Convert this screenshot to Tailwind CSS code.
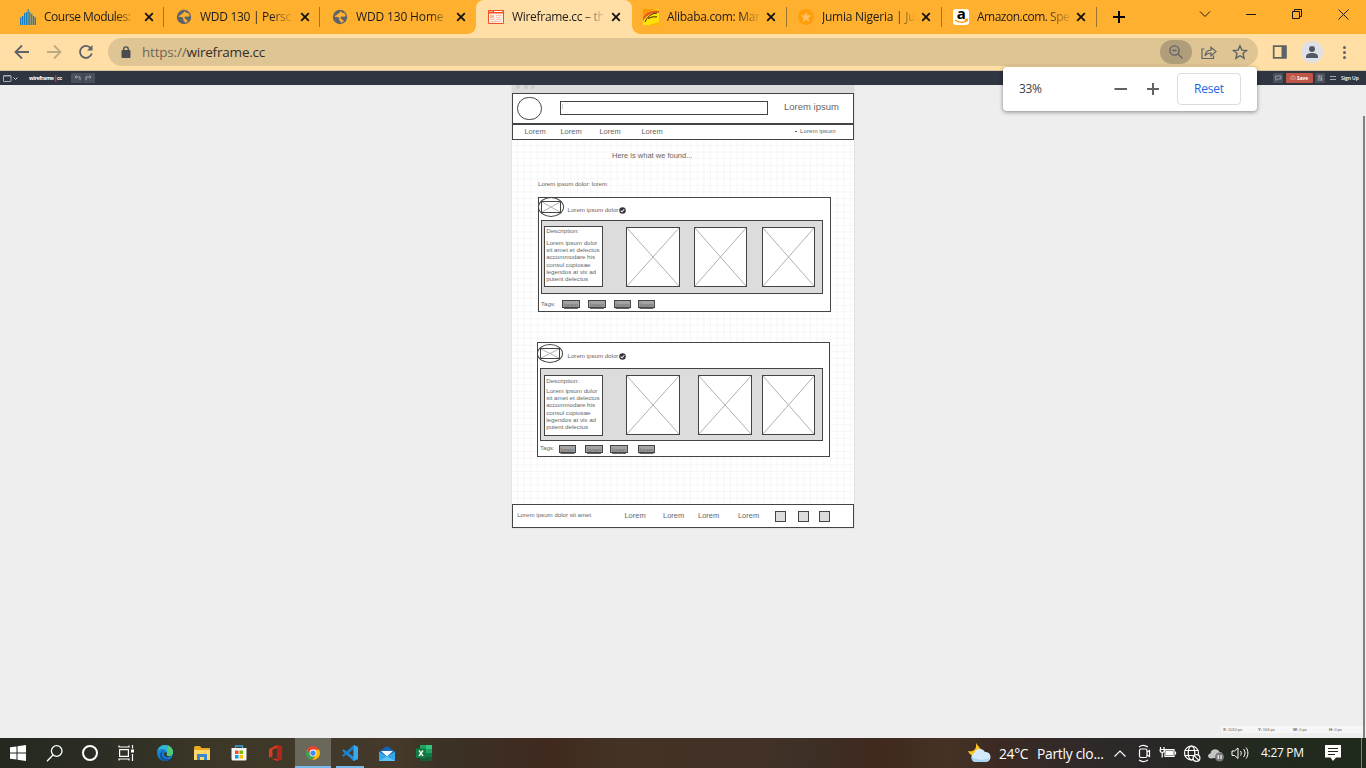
<!DOCTYPE html>
<html lang="en">
<head>
<meta charset="utf-8">
<title>Wireframe.cc</title>
<script src="https://cdn.jsdelivr.net/npm/@tailwindcss/browser@4"></script>
</head>
<body class="w-[1366px] h-[768px] overflow-hidden relative flex flex-col bg-[#eeeeee] font-['Open_Sans',sans-serif]">

<svg class="hidden">
  <symbol id="close" viewBox="0 0 10 10"><path d="M1.2 1.2L8.8 8.8M8.8 1.2L1.2 8.8" stroke="#111" stroke-width="1.8" fill="none"/></symbol>
  <symbol id="globe" viewBox="0 0 16 16"><circle cx="8" cy="8" r="7.2" fill="#5f6368"/><path d="M9 2.2c-1.6.6-1.2 1.9-2.4 2.3-1.5.4-1.3 1.5-2.6 1.8L2.4 7.200c1.600 1.300 3.200.5 4.400 1.300 1.200.8 0 2 .6 3 .4.900 1.500.600 1.400 2.300 1.300-.200 2.600-.800 3.400-1.700-1.500-.200-1.200-1.800-2.600-2.200-1.300-.5-1.600-1.300-.700-2 1-.800 2.500.300 3.600-.300.600-.400 1-.3 1.300-.1-.1-1.500-.8-2.900-1.800-3.800-.8.500-1.800.5-2-.3z" fill="#ffb02e"/></symbol>
  <symbol id="cross" viewBox="0 0 54 60" preserveAspectRatio="none"><path d="M0 0L54 60M54 0L0 60" stroke="#b0b0b0" stroke-width="1" vector-effect="non-scaling-stroke"/></symbol>
  <symbol id="check" viewBox="0 0 8 8"><circle cx="4" cy="4" r="2.900" fill="#333"/><path d="M2.400 4.100L3.600 5.200L5.600 2.900" stroke="#fff" stroke-width=".9" fill="none"/></symbol>
</svg>

<!-- Tab strip -->
<header class="h-[34px] shrink-0 flex bg-[#ffb02e] pl-2 text-[12px] tracking-[-0.5px] text-[#1c1c1c]">
  <div class="w-[156px] flex items-center pl-3">
    <svg class="size-4 shrink-0" viewBox="0 0 16 16" fill="#1c7fbd"><path d="M0 8.500h1.400V16H0zM2 7h1.400v9H2zM4 4h1.400v12H4zM6 3h1.300v13H6zM7.700 0h1v16h-1zM9.200 3h1.300v13H9.200zM11.100 5h1.300v11h-1.300zM12.900 7h1.300v9h-1.300zM14.700 8.500H16V16h-1.300z"/></svg>
    <span class="ml-2 w-[91px] shrink-0 whitespace-nowrap [mask-image:linear-gradient(to_right,black_78%,#0003_98%)]">Course Modules:</span>
    <svg class="size-[10px] ml-[9px] shrink-0"><use href="#close"/></svg><i class="ml-[9px] h-5 w-px shrink-0 bg-[#9c7530]"></i>
  </div>
  <div class="w-[156px] flex items-center pl-3">
    <svg class="size-4 shrink-0"><use href="#globe"/></svg>
    <span class="ml-2 w-[91px] shrink-0 whitespace-nowrap tracking-[-0.3px] [mask-image:linear-gradient(to_right,black_78%,#0003_98%)]">WDD 130 | Perso</span>
    <svg class="size-[10px] ml-[9px] shrink-0"><use href="#close"/></svg><i class="ml-[9px] h-5 w-px shrink-0 bg-[#9c7530]"></i>
  </div>
  <div class="w-[156px] flex items-center pl-3">
    <svg class="size-4 shrink-0"><use href="#globe"/></svg>
    <span class="ml-2 w-[91px] shrink-0 whitespace-nowrap tracking-[-0.15px] [mask-image:linear-gradient(to_right,black_82%,#0003_98%)]">WDD 130 Home</span>
    <svg class="size-[10px] ml-[9px] shrink-0"><use href="#close"/></svg>
  </div>
  <div class="w-[156px] relative flex items-center pl-3 bg-[#ffdfa5] rounded-t-[8px]">
    <i class="absolute bottom-0 -left-2 size-2 bg-[radial-gradient(circle_at_0_0,transparent_7.5px,#ffdfa5_8px)]"></i>
    <i class="absolute bottom-0 -right-2 size-2 bg-[radial-gradient(circle_at_100%_0,transparent_7.5px,#ffdfa5_8px)]"></i>
    <svg class="size-4 shrink-0" viewBox="0 0 16 16"><path d="M.5 1.500h15v13H.5z" fill="#fff0e6" stroke="#f4511e"/><path d="M0 1h16v3.500H0z" fill="#f4511e"/><path d="M1.500 2.500h1M3.500 2.500h1M6 2.500h8.500" stroke="#fff"/><path d="M2 6h4v3H2z" fill="#f9b79f"/><path d="M8 6.500h5.500M8 8.500h4.500M2.500 10.500h4M8 10.500h5.500M2.500 12.500h11" stroke="#fbc0ab"/></svg>
    <span class="ml-2 w-[91px] shrink-0 whitespace-nowrap tracking-[-0.3px] [mask-image:linear-gradient(to_right,black_78%,#0003_98%)]">Wireframe.cc – th</span>
    <svg class="size-[10px] ml-[8px] shrink-0"><use href="#close"/></svg>
  </div>
  <div class="w-[155px] flex items-center pl-[11px]">
    <svg class="size-4 shrink-0" viewBox="0 0 16 16"><path d="M0 0h16v16H0z" fill="#ffe10a"/><path d="M0 0h14C7 1 2 5 0 10z" fill="#ff9800"/><path d="M0 9C3 3 8 1 16 1.500V4C9 3 4 6 0 12z" fill="#e8572a"/><path d="M16 13v3H6z" fill="#ffb300"/><path d="M2 13C4 8 8 4.500 14 4M5 9.500l4-1.500 5-.2" stroke="#3d2500" stroke-width="1" fill="none"/></svg>
    <span class="ml-2 w-[92px] shrink-0 whitespace-nowrap tracking-[-0.3px] [mask-image:linear-gradient(to_right,black_78%,#0003_98%)]">Alibaba.com: Mar</span>
    <svg class="size-[10px] ml-[7px] shrink-0"><use href="#close"/></svg><i class="ml-[10px] h-5 w-px shrink-0 bg-[#9c7530]"></i>
  </div>
  <div class="w-[155px] flex items-center pl-[11px]">
    <svg class="size-4 shrink-0" viewBox="0 0 16 16"><circle cx="8" cy="8" r="8" fill="#ff9d0b"/><path d="M8 2.800l1.500 3.500 3.800.3-2.900 2.500.9 3.700L8 10.800l-3.300 2 .9-3.700-2.900-2.500 3.800-.3z" fill="#ffc164"/></svg>
    <span class="ml-2 w-[92px] shrink-0 whitespace-nowrap tracking-[-0.25px] [mask-image:linear-gradient(to_right,black_80%,#0003_98%)]">Jumia Nigeria | Ju</span>
    <svg class="size-[10px] ml-[7px] shrink-0"><use href="#close"/></svg><i class="ml-[10px] h-5 w-px shrink-0 bg-[#9c7530]"></i>
  </div>
  <div class="w-[155px] flex items-center pl-[11px]">
    <span class="size-4 shrink-0 rounded-[3px] bg-white flex flex-col items-center text-[15px] font-bold leading-[9px] text-black">a
      <svg class="w-4 h-[6px] shrink-0" viewBox="0 0 16 6"><path d="M2 2c4 3 9 3 11.500.5M11.500 1.500l3-.2-.8 2.500" stroke="#ff9900" stroke-width="1.300" fill="none"/></svg></span>
    <span class="ml-2 w-[92px] shrink-0 whitespace-nowrap tracking-[-0.5px] [mask-image:linear-gradient(to_right,black_74%,#0003_98%)]">Amazon.com. Spe</span>
    <svg class="size-[10px] ml-[7px] shrink-0"><use href="#close"/></svg><i class="ml-[10px] h-5 w-px shrink-0 bg-[#9c7530]"></i>
  </div>
  <svg class="w-[262px] h-[34px] ml-auto" viewBox="1104 0 262 34" fill="none" stroke="#1a1a1a"><path d="M1113 17h12M1119 11v12" stroke="#000" stroke-width="2"/><path d="M1200 11.500l5 5 5-5M1246 14.500h10M1338.500 9.500l10 10M1348.500 9.500l-10 10"/><path d="M1292.500 11.500h7v7h-7zM1294.500 11.500v-2h7v7h-2"/></svg>
</header>

<!-- Toolbar -->
<div class="h-[37px] shrink-0 flex items-center bg-[#ffdfa5] border-b border-[#d8c49b]">
  <svg class="w-[108px] h-[36px]" viewBox="0 34 108 36" fill="none" stroke="#5f6368" stroke-width="1.800"><path d="M29 52H16M22 45.500L15.500 52L22 58.500"/><path d="M47 52h13M54 45.500L60.500 52L54 58.500" stroke="#bfa982"/><path d="M91 48.500a6 6 0 1 0 .8 5"/><path d="M92.500 45v5.500H87z" fill="#5f6368" stroke="none"/></svg>
  <div class="w-[1150px] h-[28px] rounded-full bg-[#dfc594] flex items-center">
    <svg class="w-[10px] h-[12px] ml-[13px]" viewBox="0 0 10 12"><path d="M1 4.500h8v7H1z" fill="#4a4c50" stroke="#4a4c50" stroke-linejoin="round"/><path d="M2.700 5V3.200a2.300 2.300 0 0 1 4.600 0V5" fill="none" stroke="#4a4c50" stroke-width="1.300"/></svg>
    <span class="ml-[11px] text-[13.5px] tracking-[-0.2px] text-[#332f28]"><span class="text-[#6f6655]">https://</span>wireframe.cc</span>
    <svg class="ml-auto mr-[6px] w-[92px] h-[24px]" viewBox="1160 40 92 24" fill="none" stroke="#5f6368" stroke-width="1.400"><rect x="1160" y="40" width="32" height="24" rx="12" fill="#b09d7a" stroke="none"/><circle cx="1174.500" cy="50.500" r="4.600"/><path d="M1178 54l4.500 4.500M1172.500 50.500h4"/><path d="M1204.500 49h-2.500v9.500h11.500v-3M1205 56c.5-4 3-5.800 6-5.800v-3l5 4.300-5 4.500v-3c-2.500 0-4.500.5-6 3z" stroke-width="1.200"/><path d="M1240 45.800l1.900 4.300 4.600.4-3.500 3.100 1.100 4.600-4.100-2.500-4.100 2.500 1.100-4.600-3.500-3.100 4.600-.4z"/></svg>
  </div>
  <svg class="w-[108px] h-[36px]" viewBox="1258 34 108 36"><path d="M1273.700 46.200h12.100v11.600h-12.100z" fill="none" stroke="#5f6368" stroke-width="1.700"/><path d="M1281.500 46h5v12h-5z" fill="#5f6368"/><circle cx="1312" cy="52" r="11" fill="#dfe1e6"/><circle cx="1312" cy="49" r="3" fill="#515964"/><path d="M1306 58v-1.500c0-2.500 3-3.500 6-3.500s6 1 6 3.500V58z" fill="#515964"/><g fill="#5f6368"><circle cx="1344.500" cy="47.500" r="1.500"/><circle cx="1344.500" cy="52.500" r="1.500"/><circle cx="1344.500" cy="57.500" r="1.500"/></g></svg>
</div>

<!-- App bar -->
<div class="h-[14px] shrink-0 relative z-10 flex items-center bg-[#2f3541] text-white">
  <svg class="w-[16px] h-[14px] ml-[3px]" viewBox="3 71 16 14" fill="none" stroke="#a9adb4"><rect x="3.500" y="75.500" width="7.500" height="6" rx=".5"/><path d="M3.500 76h7.500" /><path d="M13.500 77.500l2 2 2-2" stroke="#d0d2d6"/></svg>
  <span class="ml-[10px] w-[30px] text-[5.4px] leading-[14px] font-bold tracking-[-0.4px] whitespace-nowrap">wireframe<span class="text-[#e04a3a] text-[7px] leading-[6px]">|</span>cc</span>
  <svg class="w-[24px] h-[10px] ml-[12px]" viewBox="0 0 24 10" fill="none" stroke="#a4a8ae" stroke-width=".9"><rect width="24" height="10" rx="1" fill="#4a505b" stroke="none"/><path d="M12 0v10" stroke="#373d48"/><path d="M9 7V4H4M5.500 2.500L4 4l1.500 1.500M15 7V4h5M18.500 2.500L20 4l-1.500 1.500"/></svg>
  <div class="ml-auto flex items-center">
    <svg class="w-[10px] h-[10px]" viewBox="0 0 10 10"><rect width="10" height="10" rx="1" fill="#4a505b"/><path d="M2.500 3h5.500v3H4.500L3 7.500z" fill="none" stroke="#a4a8ae" stroke-width=".8"/></svg>
    <span class="ml-[3px] w-[27px] h-[10px] rounded-[1px] bg-[#bf5647] flex items-center text-[4.800px] leading-[10px] font-bold"><svg class="w-[6px] h-[6px] ml-[4px] mr-[1px]" viewBox="0 0 6 6"><path d="M1.500 4.500a1.300 1.300 0 0 1 0-2.500 1.600 1.600 0 0 1 3 0 1.300 1.300 0 0 1 0 2.500M3 5V3" stroke="#ecc" stroke-width=".7" fill="none"/></svg>Save</span>
    <svg class="w-[10px] h-[10px] ml-[2px]" viewBox="0 0 10 10"><rect width="10" height="10" rx="1" fill="#4a505b"/><path d="M2.500 3h5M2.500 5h5M2.500 7h5M4 2.500v2M6.500 4.500v3" stroke="#b4b8be" stroke-width=".8"/></svg>
    <svg class="w-[6px] h-[6px] ml-[5px]" viewBox="0 0 6 6"><path d="M0 1.500h6M0 4.500h6" stroke="#a4a8ae" stroke-width="1"/></svg>
    <span class="ml-[5px] w-[25px] text-[5.100px] leading-[14px] font-semibold tracking-[-0.1px] whitespace-nowrap">Sign Up</span>
  </div>
</div>

<!-- Wireframe canvas; its items are freely placed -->
<main class="relative flex-1 font-['Liberation_Sans',sans-serif] text-[#666] whitespace-nowrap leading-[8px]">
 <div class="absolute left-[512px] top-0 w-[342px] h-[443px] bg-white shadow-[0_0_1px_1px_#e4e4e4] bg-[linear-gradient(to_right,#f6f6f6_1px,transparent_1px),linear-gradient(to_bottom,#f6f6f6_1px,transparent_1px)] bg-size-[6.67px_6.67px] bg-position-[5px_0px]"></div>
 <div class="absolute left-[512px] top-0 w-[342px] h-[8px] bg-[#dcdcdc]"></div>
 <i class="absolute left-[516px] top-0 size-1 rounded-full bg-[#cbcbcb]"></i><i class="absolute left-[524px] top-0 size-1 rounded-full bg-[#cbcbcb]"></i><i class="absolute left-[531px] top-0 size-1 rounded-full bg-[#cbcbcb]"></i>

 <div class="absolute left-[512px] top-[8px] w-[342px] h-[31px] border border-[#444] bg-white"></div>
 <div class="absolute left-[517px] top-[12px] w-[25px] h-[23px] border border-[#444] rounded-full"></div>
 <div class="absolute left-[560px] top-[16px] w-[208px] h-[14px] border border-[#444]"></div>
 <i class="absolute left-[562px] top-[19px] w-px h-[5px] bg-[#ccc]"></i>
 <span class="absolute left-[784px] top-[18px] text-[9.5px]">Lorem ipsum</span>
 <div class="absolute left-[512px] top-[39px] w-[342px] h-[16px] border border-[#444] bg-white"></div>
 <span class="absolute left-[524.4px] top-[43px] text-[7.5px]">Lorem</span>
 <span class="absolute left-[560.4px] top-[43px] text-[7.5px]">Lorem</span>
 <span class="absolute left-[599.4px] top-[43px] text-[7.5px]">Lorem</span>
 <span class="absolute left-[641.4px] top-[43px] text-[7.5px]">Lorem</span>
 <i class="absolute left-[795px] top-[46px] w-[2px] h-px bg-[#555]"></i>
 <span class="absolute left-[800px] top-[42px] text-[6.2px]">Lorem ipsum</span>
 <span class="absolute left-[612px] top-[67px] text-[7.5px]">Here is what we found...</span>
 <span class="absolute left-[538px] top-[95px] text-[6.1px]">Lorem ipsum dolor: lorem</span>

 <!-- First result -->
 <div class="absolute left-[538px] top-[112px] w-[293px] h-[115px] border border-[#444] bg-white"></div>
 <div class="absolute left-[538px] top-[112px] w-[26px] h-[20px] border border-[#444] rounded-[50%]"></div>
 <div class="absolute left-[541px] top-[116px] w-[20px] h-[12px] border border-[#444]"><svg class="size-full block"><use href="#cross"/></svg></div>
 <span class="absolute left-[567.5px] top-[121px] text-[6.15px]">Lorem ipsum dolor</span>
 <svg class="absolute left-[618px] top-[121px] size-[9px]"><use href="#check"/></svg>
 <div class="absolute left-[541px] top-[135px] w-[282px] h-[74px] border border-[#444] bg-[#dcdcdc]"></div>
 <div class="absolute left-[544px] top-[141px] w-[59px] h-[61px] border border-[#444] bg-white"></div>
 <span class="absolute left-[546.2px] top-[142px] text-[6.2px]">Description:</span>
 <p class="absolute left-[546.2px] top-[154px] text-[6.2px] leading-[7.2px]">Lorem ipsum dolor<br>sit amet et delectus<br>accommodare his<br>consul copiosae<br>legendos at vix ad<br>putent delectus</p>
 <div class="absolute left-[626px] top-[142px] w-[54px] h-[60px] border border-[#444] bg-white"><svg class="size-full block"><use href="#cross"/></svg></div>
 <div class="absolute left-[694px] top-[142px] w-[53px] h-[60px] border border-[#444] bg-white"><svg class="size-full block"><use href="#cross"/></svg></div>
 <div class="absolute left-[762px] top-[142px] w-[53px] h-[60px] border border-[#444] bg-white"><svg class="size-full block"><use href="#cross"/></svg></div>
 <span class="absolute left-[541px] top-[215px] text-[6.100px]">Tags:</span>
 <div class="absolute left-[562px] top-[215px] w-[18px] h-[8px] border border-[#444] bg-[#a3a3a3] text-[#666] text-[5.6px] leading-[8px] text-center underline decoration-[0.5px]">lorem</div>
 <div class="absolute left-[588px] top-[215px] w-[18px] h-[8px] border border-[#444] bg-[#a3a3a3] text-[#666] text-[5.6px] leading-[8px] text-center underline decoration-[0.5px]">lorem</div>
 <div class="absolute left-[614px] top-[215px] w-[17px] h-[8px] border border-[#444] bg-[#a3a3a3] text-[#666] text-[5.6px] leading-[8px] text-center underline decoration-[0.5px]">lorem</div>
 <div class="absolute left-[638px] top-[215px] w-[17px] h-[8px] border border-[#444] bg-[#a3a3a3] text-[#666] text-[5.6px] leading-[8px] text-center underline decoration-[0.5px]">lorem</div>

 <!-- Second result -->
 <div class="absolute left-[537px] top-[257px] w-[293px] h-[115px] border border-[#444] bg-white"></div>
 <div class="absolute left-[537px] top-[259px] w-[26px] h-[19px] border border-[#444] rounded-[50%]"></div>
 <div class="absolute left-[540px] top-[263px] w-[20px] h-[11px] border border-[#444]"><svg class="size-full block"><use href="#cross"/></svg></div>
 <span class="absolute left-[567.5px] top-[267px] text-[6.15px]">Lorem ipsum dolor</span>
 <svg class="absolute left-[618px] top-[267px] size-[9px]"><use href="#check"/></svg>
 <div class="absolute left-[540px] top-[283px] w-[283px] h-[73px] border border-[#444] bg-[#dcdcdc]"></div>
 <div class="absolute left-[544px] top-[290px] w-[59px] h-[61px] border border-[#444] bg-white"></div>
 <span class="absolute left-[546.2px] top-[292px] text-[6.2px]">Description:</span>
 <p class="absolute left-[546.2px] top-[302px] text-[6.2px] leading-[7.2px]">Lorem ipsum dolor<br>sit amet et delectus<br>accommodare his<br>consul copiosae<br>legendos at vix ad<br>putent delectus</p>
 <div class="absolute left-[626px] top-[290px] w-[54px] h-[60px] border border-[#444] bg-white"><svg class="size-full block"><use href="#cross"/></svg></div>
 <div class="absolute left-[698px] top-[290px] w-[54px] h-[60px] border border-[#444] bg-white"><svg class="size-full block"><use href="#cross"/></svg></div>
 <div class="absolute left-[762px] top-[290px] w-[53px] h-[60px] border border-[#444] bg-white"><svg class="size-full block"><use href="#cross"/></svg></div>
 <span class="absolute left-[540px] top-[359px] text-[6.1px]">Tags:</span>
 <div class="absolute left-[559px] top-[360px] w-[17px] h-[8px] border border-[#444] bg-[#a3a3a3] text-[#666] text-[5.6px] leading-[8px] text-center underline decoration-[0.5px]">lorem</div>
 <div class="absolute left-[585px] top-[360px] w-[18px] h-[8px] border border-[#444] bg-[#a3a3a3] text-[#666] text-[5.6px] leading-[8px] text-center underline decoration-[0.5px]">lorem</div>
 <div class="absolute left-[610px] top-[360px] w-[18px] h-[8px] border border-[#444] bg-[#a3a3a3] text-[#666] text-[5.6px] leading-[8px] text-center underline decoration-[0.5px]">lorem</div>
 <div class="absolute left-[638px] top-[360px] w-[17px] h-[8px] border border-[#444] bg-[#a3a3a3] text-[#666] text-[5.6px] leading-[8px] text-center underline decoration-[0.5px]">lorem</div>

 <!-- Footer -->
 <div class="absolute left-[512px] top-[419px] w-[342px] h-[24px] border border-[#444] bg-white"></div>
 <span class="absolute left-[517.2px] top-[426px] text-[6.15px]">Lorem ipsum dolor sit amet</span>
 <span class="absolute left-[624.4px] top-[427px] text-[7.5px]">Lorem</span>
 <span class="absolute left-[663px] top-[427px] text-[7.5px]">Lorem</span>
 <span class="absolute left-[698px] top-[427px] text-[7.5px]">Lorem</span>
 <span class="absolute left-[737.9px] top-[427px] text-[7.5px]">Lorem</span>
 <i class="absolute left-[775px] top-[426px] size-[11px] border border-[#444] bg-[#dcdcdc]"></i>
 <i class="absolute left-[798px] top-[426px] size-[11px] border border-[#444] bg-[#dcdcdc]"></i>
 <i class="absolute left-[819px] top-[426px] size-[11px] border border-[#444] bg-[#dcdcdc]"></i>

 <i class="absolute right-px top-[31px] w-[2px] bottom-0 bg-[#7f8287]"></i>
 <div class="absolute right-[3px] bottom-[5px] w-[142px] h-[7px] bg-[#f6f6f6] text-[4.200px] leading-[7px] tracking-[-0.1px] flex">
   <span class="w-[35px] pl-[2px]"><b>X:</b> 1010 px</span><span class="w-[36px] pl-[2px]"><b>Y:</b> 164 px</span><span class="w-[35px] pl-[1px]"><b>W:</b> 0 px</span><span class="pl-[2px]"><b>H:</b> 0 px</span>
 </div>
</main>

<!-- Zoom bubble -->
<div class="absolute z-20 left-[1003px] top-[67px] w-[254px] h-[44px] rounded-[4px] bg-white shadow-[0_1px_4px_rgba(0,0,0,0.45)] flex items-center text-[12px] text-[#3c4043]">
  <span class="ml-4 w-[94px] tracking-[-0.4px]">33%</span>
  <svg class="w-[46px] h-[14px]" viewBox="0 0 46 14"><path d="M1.500 7h12.500M34 7h12M40 1v12" stroke="#5f6368" stroke-width="2"/></svg>
  <span class="ml-auto mr-4 w-[64px] h-[32px] rounded-[4px] border border-[#dadce0] grid place-items-center text-[#1a66e0] tracking-[-0.2px]">Reset</span>
</div>

<!-- Taskbar -->
<footer class="h-[30px] shrink-0 flex text-white bg-[linear-gradient(to_right,#23291f_0,#2b2c24_90px,#3b3727_200px,#40392a_300px,#45392a_400px,#3a3226_440px,#40291f_550px,#433325_620px,#423127_760px,#3d3026_800px,#40291f_880px,#453225_950px,#3b2a23_1000px,#302a2a_1080px,#2a2828_1140px,#23291f_1240px,#1f2a1b_1366px)]">
  <div class="w-9 grid place-items-center"><svg class="size-4" viewBox="0 0 16 16" fill="#fff"><path d="M0 2.300L6.500 1.400V7.500H0zM7.500 1.200L16 0V7.500H7.500zM0 8.500h6.500v6.100L0 13.700zM7.500 8.500H16V16L7.500 14.800z"/></svg></div>
  <div class="w-9 grid place-items-center"><svg class="size-[17px]" viewBox="0 0 17 17" fill="none" stroke="#fff" stroke-width="1.300"><circle cx="10.700" cy="6" r="5.300"/><path d="M7 10L1 16.200"/></svg></div>
  <div class="w-9 grid place-items-center"><i class="size-4 rounded-full border-2 border-white"></i></div>
  <div class="w-9 mr-[2px] grid place-items-center"><svg class="w-[17px] h-4" viewBox="0 0 17 16" fill="none" stroke="#fff" stroke-width="1.200"><path d="M1.600 4.600h8.800v6.800H1.600zM1 .6V2h10V.6M1 15.500V14h10v1.500M14.500 0v3.500M14.500 9v7"/><path d="M13 4.500h3v3h-3z" fill="#fff" stroke="none"/></svg></div>
  <div class="w-[37px] grid place-items-center"><svg class="size-4" viewBox="0 0 16 16"><circle cx="8" cy="8" r="8" fill="#1683d4"/><path d="M.2 7C1 2.500 4 0 8 0c5 0 8 3.500 8 7 0 2.700-2 4-4 4-1.600 0-2.600-.6-2.600-1.300 0-.6.6-.8.6-2C10 5.500 7.500 4 5 4 2.500 4 .8 5.500.2 7z" fill="#2fb4d4"/><path d="M11 .6c3.200 1.200 5 4 5 6.400 0 2.700-2 4-4 4-1.600 0-2.600-.6-2.600-1.300 0-.6.600-.8.600-2z" fill="#52cc74"/><path d="M5.200 9c0 4 3.800 6 8.800 4.200C12.500 15 10.500 16 8 16c-3.500-.3-5.300-3-5.300-5.500C2.700 7.500 5 6 7 5.500 6 6.500 5.200 7.500 5.200 9z" fill="#0c59a4"/><path d="M7.200 7.500c-.8 3 1 5.300 5 4.600l2-.8c-2.600.5-4.700-.2-4.700-1.500 0-.6.600-1 .6-2z" fill="#37352a"/></svg></div>
  <div class="w-[37px] grid place-items-center"><svg class="w-4 h-[15px]" viewBox="0 0 16 15"><path d="M0 1.500L1 0h5l1.500 2H16v11H0z" fill="#e8a920"/><path d="M0 4h16v10H0z" fill="#ffd766"/><path d="M3 14V8h10v6h-3v-3H6v3z" fill="#3a86d4"/></svg></div>
  <div class="w-[37px] grid place-items-center"><svg class="w-4 h-4" viewBox="0 0 16 16"><path d="M4.500 4V1h7v3" fill="none" stroke="#39a5e0" stroke-width="1.300"/><path d="M.5 3h15v11q0 1.500-1.500 1.500H2Q.5 15.500.5 14z" fill="#f5f5f5"/><path d="M4 5.500h3.500V9H4z" fill="#f25022"/><path d="M8.500 5.500H12V9H8.500z" fill="#7fba00"/><path d="M4 10h3.500v3.500H4z" fill="#00a4ef"/><path d="M8.500 10H12v3.500H8.500z" fill="#ffb900"/></svg></div>
  <div class="w-[37px] mr-px grid place-items-center"><svg class="w-[13px] h-4" viewBox="0 0 13 16"><path d="M0 4L8 0l5 1.800v12.400L8 16l-6-2.600 6 .6V3L3.500 4.500v7L0 12.800z" fill="#d83b1e"/><path d="M8 0l5 1.800v12.400L8 16z" fill="#b3241b"/></svg></div>
  <div class="w-9 grid place-items-center bg-[#6a675b] border-b-2 border-[#76b9ed] pt-[2px]"><svg class="size-[14px]" viewBox="0 0 16 16"><circle cx="8" cy="8" r="8" fill="#ea4335"/><path d="M1.100 4A8 8 0 0 0 7 15.950L11 9.500 8 11.500 4.700 10z" fill="#34a853"/><path d="M15 4.300A8 8 0 0 1 7.500 16L11.500 9.500 11 5 8 4.300z" fill="#fbbc05"/><circle cx="8" cy="8" r="3.900" fill="#fff"/><circle cx="8" cy="8" r="3" fill="#4285f4"/></svg></div>
  <div class="w-7 ml-[5px] mr-1 grid place-items-center border-b-2 border-[#76b9ed] pt-[2px]"><svg class="size-4" viewBox="0 0 16 16"><path d="M11.500 0L16 2v12l-4.500 2L0 5.500l1.500-1.300L11.500 11.500z" fill="#1f8ad2"/><path d="M11.500 0L16 2v12l-4.500 2z" fill="#36a9f0"/><path d="M11.500 4.500L1.500 11.800 0 10.500 11.500.2z" fill="#1b80c9"/></svg></div>
  <div class="w-[37px] grid place-items-center"><svg class="w-4 h-[15px]" viewBox="0 0 16 15"><path d="M0 5.500L8 0l8 5.500V15H0z" fill="#1664b0"/><path d="M2 5h12L8 10.500z" fill="#f4f9fd"/><path d="M0 5.500l8 5 8-5V15H0z" fill="#35a7ea"/><path d="M0 15l8-4.500L16 15z" fill="#5fc3f7"/></svg></div>
  <div class="w-[37px] grid place-items-center"><svg class="w-4 h-4" viewBox="0 0 16 16"><path d="M4 0h12v16H4z" fill="#21a366"/><path d="M4 4h6v4H4z" fill="#107c41"/><path d="M10 0h6v4h-6z" fill="#33c481"/><path d="M4 8h12v8H4z" fill="#185c37"/><path d="M10 8h6v4h-6z" fill="#107c41"/><path d="M0 3.500h10v9.500H0z" fill="#107c41"/><path d="M3 5.500l4 5.500M7 5.500L3 11" stroke="#fff" stroke-width="1.300"/></svg></div>

  <div class="ml-auto w-[398px] flex items-center text-[13.8px] whitespace-nowrap">
    <svg class="w-[23px] h-[20px]" viewBox="0 0 23 20"><path d="M8 0c3 4 5 6 7 9L8 13C4 13 1 11 0 8c5 1 9-1 8-8z" fill="#ffc61a"/><path d="M7 19a4.500 4.500 0 0 1-1-8.500 6 6 0 0 1 11-1.500 5 5 0 0 1 1 10z" fill="#d5ebfb"/><path d="M7 19a4 4 0 0 1-3-5c4 3 10 4 17 1-.5 2.500-2 4-4 4z" fill="#a8d4f5"/></svg>
    <span class="ml-[8px] w-[38px] pt-[2px] tracking-[-0.3px]">24°C</span>
    <span class="w-[76px] pt-[2px] tracking-[-0.25px]">Partly clo...</span>
    <svg class="w-[140px] h-[30px]" viewBox="1113 738 140 30" fill="none" stroke="#fff" stroke-width="1.200"><path d="M1114.500 756.500l5.500-5.500 5.500 5.500"/><rect x="1139.500" y="749" width="7.500" height="8.500" rx="1.500"/><path d="M1147 752l2.500-1.500v6l-2.500-1.500M1139 747c2.500-2 6-2 9 0M1139 760c2.500 2 6 2 9 0"/><path d="M1165 749.500h9v7h-9z"/><path d="M1166.500 751h6v4h-6z" fill="#fff"/><path d="M1175.500 751.500v3M1160.500 747v2M1164 747v2M1160 749.500h4.500c0 2-1 3-2.300 3s-2.200-1-2.200-3M1162.200 752.500v5"/><circle cx="1191.500" cy="753" r="7"/><ellipse cx="1191.500" cy="753" rx="3.300" ry="7"/><path d="M1184.500 750.500h14M1184.500 755.500h9"/><circle cx="1196.500" cy="758" r="3.400" fill="#252625"/><path d="M1194.300 755.800l4.400 4.400"/><path d="M1211 758.500c-3.500 0-4-4.500-.5-5 .5-5 7.500-5.500 9-1.500 3 0 3.500 3 3 5z" fill="#c4c4c4" stroke="none"/><circle cx="1219.500" cy="757" r="4.500" fill="#777" stroke="none"/><path d="M1218.200 755v4M1221 755v4"/><path d="M1232 751h2.500l3.500-3v10.500l-3.500-3H1232zM1240.500 751c1 1.500 1 3 0 4.500M1243.500 749c2 2.500 2 5.500 0 8M1246 747.500c2.500 3 2.500 8 0 11" stroke-width="1"/></svg>
    <span class="ml-[8px] w-[64px] text-[12px] tracking-[-0.3px]">4:27 PM</span>
    <svg class="w-4 h-4" viewBox="0 0 16 16"><path d="M0 0h16v12.500h-5L8 16l-2.500-3.500H0z" fill="#fff"/><path d="M3 3.500h10M3 6.500h10M3 9.500h7" stroke="#1f2a1b" stroke-width="1.200"/></svg>
    <i class="ml-auto mr-1 w-px h-full bg-[#7c8378]"></i>
  </div>
</footer>
</body>
</html>
